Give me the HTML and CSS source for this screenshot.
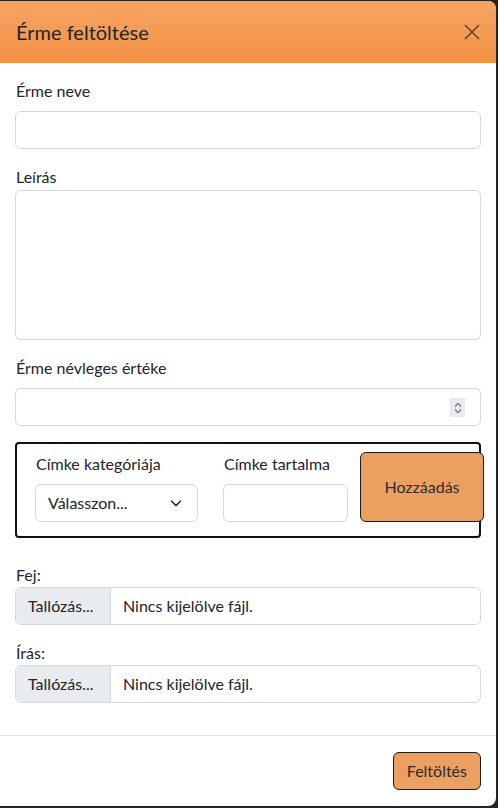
FILE: index.html
```html
<!DOCTYPE html>
<html lang="hu">
<head>
<meta charset="utf-8">
<link rel="stylesheet" href="styles.css">
</head>
<body>
<div class="modal">
  <div class="modal-header">
    <h1 class="modal-title">Érme feltöltése</h1>
    <span class="close" aria-label="Bezárás">
      <svg width="16" height="16" viewBox="0 0 16 16"><path d="M1 1L15 15M15 1L1 15" stroke="#5b4636" stroke-width="1.6" fill="none"/></svg>
    </span>
  </div>
  <div class="modal-body">
    <div class="group">
      <label class="label">Érme neve</label>
      <input class="control" type="text">
    </div>
    <div class="group">
      <label class="label tight">Leírás</label>
      <textarea class="control area"></textarea>
    </div>
    <div class="group">
      <label class="label">Érme névleges értéke</label>
      <div class="control number">
        <input class="bare" type="text">
        <span class="spin">
          <svg width="10" height="14" viewBox="0 0 10 14"><path d="M2 5.5L5 2.5L8 5.5M2 8.5L5 11.5L8 8.5" stroke="#7a7a86" stroke-width="1.3" fill="none"/></svg>
        </span>
      </div>
    </div>
    <div class="tagbox">
      <div class="tagcol">
        <label class="label">Címke kategóriája</label>
        <div class="control select">
          <span>Válasszon...</span>
          <svg width="14" height="14" viewBox="0 0 16 16"><path d="M3 6l5 5 5-5" stroke="#343a40" stroke-width="2" fill="none" stroke-linecap="round" stroke-linejoin="round"/></svg>
        </div>
      </div>
      <div class="tagcol">
        <label class="label">Címke tartalma</label>
        <input class="control" type="text">
      </div>
      <button class="btn add">Hozzáadás</button>
    </div>
    <div class="group">
      <label class="label flat">Fej:</label>
      <div class="control file"><span class="browse">Tallózás...</span><span class="fname">Nincs kijelölve fájl.</span></div>
    </div>
    <div class="group">
      <label class="label flat">Írás:</label>
      <div class="control file"><span class="browse">Tallózás...</span><span class="fname">Nincs kijelölve fájl.</span></div>
    </div>
  </div>
  <div class="modal-footer">
    <button class="btn">Feltöltés</button>
  </div>
</div>
</body>
</html>
```
FILE: styles.css
```css
* { box-sizing: border-box; }
html, body { margin: 0; padding: 0; }
body {
  background: #2b2218;
  font-family: "Lato", "Noto Sans", sans-serif;
  color: #212529;
  font-size: 16px;
  line-height: 24px;
  height: 808px;
  overflow: hidden;
  padding-top: 1px;
}
.modal {
  width: 496px;
  background: #fff;
  border-radius: 0 8px 8px 0;
  overflow: hidden;
}
.modal-header {
  height: 62px;
  padding: 16px 16px;
  display: flex;
  align-items: center;
  justify-content: space-between;
  background: linear-gradient(#f6a463, #f39243);
}
.modal-title {
  margin: 0;
  font-size: 20px;
  font-weight: 400;
  line-height: 30px;
}
.close { display: flex; padding-right: 0; }
.modal-body { padding: 16px 15px 16px 15px; }
.group { margin-bottom: 16px; display: flex; flex-direction: column; }
.label { display: block; margin-bottom: 8px; padding-left: 1px; }
.label.tight { margin-bottom: 1px; }
.label.flat { margin-bottom: 0; }
.control {
  display: block;
  width: 100%;
  height: 38px;
  border: 1px solid #d5d8dc;
  border-radius: 6px;
  background: #fff;
  font: inherit;
  padding: 6px 12px;
}
.area { height: 150px; resize: none; }
.number { display: flex; align-items: center; justify-content: space-between; padding-right: 15px; }
.bare { border: 0; outline: 0; width: 100px; font: inherit; padding: 0; }
.spin {
  width: 15px; height: 19px;
  background: #e9e9ee;
  display: flex; align-items: center; justify-content: center;
  margin-top: 1px;
}
.tagbox {
  border: 2px solid #111;
  border-radius: 4px;
  padding: 8px 8px 14px 18px;
  display: grid;
  grid-template-columns: 163px 125px 111px;
  column-gap: 25px;
  margin: 0 0 25px 0;
}
.tagbox .tagcol { display: flex; flex-direction: column; }
.tagbox .tagcol:nth-child(2) { margin-right: -13px; }
.tagbox .tagcol:nth-child(2) .control { width: 125px; }
.select {
  display: flex; align-items: center; justify-content: space-between;
  padding: 6px 14px 6px 12px;
}
.btn {
  font: inherit;
  color: #2c2c2c;
  background: #eb9f60;
  border: 1px solid #1e1a16;
  border-radius: 6px;
  padding: 6px 13px;
  height: 38px;
}
.add { height: 70px; margin-left: -13px; }
.file { display: flex; padding: 0; overflow: hidden; }
.browse {
  background: #e9ecef;
  width: 95px;
  padding: 6px 12px;
  border-right: 1px solid #d5d8dc;
}
.fname { padding: 6px 12px; }
.modal-footer {
  border-top: 1px solid #dee2e6;
  padding: 16px 15px 16px 16px;
  display: flex;
  justify-content: flex-end;
}
```
